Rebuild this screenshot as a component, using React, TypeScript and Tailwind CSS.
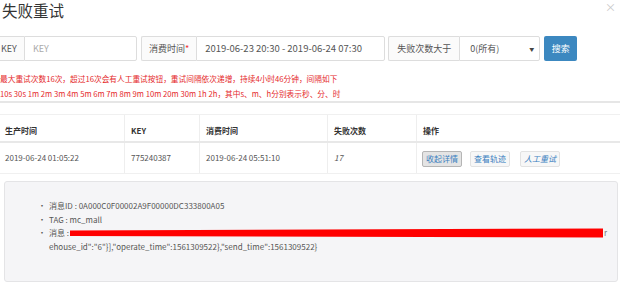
export default function App() {
  const font = { fontFamily: '"Noto Sans CJK SC", "Liberation Sans", sans-serif' };
  const wrapped = 'ehouse_id":"6"}],"operate_time":1561309522},"send_time":1561309522}';

  return (
    <div
      className="w-[620px] h-[289px] bg-white overflow-hidden text-[#555] font-['Noto_Sans_CJK_SC','Liberation_Sans',sans-serif]"
      style={font}
    >
      {/* header */}
      <div className="flex justify-between items-start">
        <h1 className="text-[15.5px] leading-[20px] text-[#333] pl-[2px]">失败重试</h1>
        <span className="text-[11px] leading-[14px] text-[#c8c8c8] pr-[4px]">×</span>
      </div>

      {/* search form */}
      <div className="flex items-center mt-[16px] h-[25px] text-[9px] whitespace-nowrap">
        <div className="flex h-full -ml-[5px]">
          <span className="flex items-center shrink-0 pl-[5px] pr-[7px] border border-[#ddd] border-r-0 bg-[#fbfbfb] rounded-l-[2px]">
            KEY
          </span>
          <span className="flex items-center shrink-0 w-[113px] px-[8px] border border-[#ddd] rounded-r-[2px] text-[#aaa]">
            KEY
          </span>
        </div>

        <div className="flex h-full ml-[4px]">
          <span className="flex items-center shrink-0 px-[7px] border border-[#ddd] border-r-0 bg-[#fbfbfb] rounded-l-[2px]">
            消费时间<span className="text-[#e33]">*</span>
          </span>
          <span className="flex items-center shrink-0 w-[189px] px-[8px] border border-[#ddd] rounded-r-[2px] text-[9.5px]">
            2019-06-23 20:30 - 2019-06-24 07:30
          </span>
        </div>

        <div className="flex h-full ml-[3px]">
          <span className="flex items-center shrink-0 px-[8px] border border-[#ddd] border-r-0 bg-[#fbfbfb] rounded-l-[2px]">
            失败次数大于
          </span>
          <span className="flex items-center justify-between shrink-0 w-[81px] pl-[10px] pr-[5px] border border-[#ddd] rounded-r-[2px]">
            0(所有)
            <span className="text-[5px] text-[#444]">▼</span>
          </span>
        </div>

        <button className="ml-[4px] h-full w-[33px] shrink-0 bg-[#3c88c0] text-white text-[9px] rounded-[2px]">
          搜索
        </button>
      </div>

      {/* tips */}
      <div className="mt-[10px] text-[7.7px] leading-[15px] text-[#e5292b]">
        <p>最大重试次数16次，超过16次会有人工重试按钮，重试间隔依次递增，持续4小时46分钟，间隔如下</p>
        <p>10s 30s 1m 2m 3m 4m 5m 6m 7m 8m 9m 10m 20m 30m 1h 2h，其中s、m、h分别表示秒、分、时</p>
      </div>
      <div className="h-[2px] bg-[#e6e6e6]" />

      {/* table */}
      <div className="mt-[11px] text-[8px] border-t border-[#f0f0f0]">
        <div className="flex h-[28px] border-b-2 border-[#e8e8e8] font-bold text-[#333]">
          <div className="w-[124px] pl-[5px] pt-[8px] leading-[16px]">生产时间</div>
          <div className="w-[75px] pl-[6px] pt-[8px] leading-[16px] border-l border-[#eee]">KEY</div>
          <div className="w-[128px] pl-[6px] pt-[8px] leading-[16px] border-l border-[#eee]">消费时间</div>
          <div className="w-[89px] pl-[6px] pt-[8px] leading-[16px] border-l border-[#eee]">失败次数</div>
          <div className="flex-1 pl-[6px] pt-[8px] leading-[16px] border-l border-[#eee]">操作</div>
        </div>
        <div className="flex h-[31px] items-stretch border-b border-[#f0f0f0]">
          <div className="w-[124px] pl-[5px] flex items-center">2019-06-24 01:05:22</div>
          <div className="w-[75px] pl-[6px] flex items-center border-l border-[#eee]">775240387</div>
          <div className="w-[128px] pl-[6px] flex items-center border-l border-[#eee]">2019-06-24 05:51:10</div>
          <div className="w-[89px] pl-[6px] flex items-center border-l border-[#eee] italic">17</div>
          <div className="flex-1 pl-[5px] pt-[2px] flex items-center gap-[8px] border-l border-[#eee] text-[#3a7fc0]">
            <span className="px-[3px] h-[16px] leading-[14px] border border-[#b5b5b5] bg-[#e4e4e4] rounded-[2px]">
              收起详情
            </span>
            <span className="px-[3px] h-[16px] leading-[14px] border border-[#e2e2e2] bg-[#f7f7f7] rounded-[2px]">
              查看轨迹
            </span>
            <span className="ml-[2px] px-[3px] h-[16px] leading-[14px] border border-[#e2e2e2] bg-[#f7f7f7] rounded-[2px] italic">
              人工重试
            </span>
          </div>
        </div>
      </div>

      {/* detail */}
      <div className="mt-[7px] ml-[4px] mr-[2px] h-[101px] bg-[#f5f5f7] border border-[#e4e4e6] rounded-[3px] pt-[17px] pl-[33px] text-[8px] leading-[13.5px]">
        <ul>
          <li className="flex">
            <span className="w-[11px]">•</span>
            <span>消息ID : 0A000C0F00002A9F00000DC333800A05</span>
          </li>
          <li className="flex">
            <span className="w-[11px]">•</span>
            <span>TAG : mc_mall</span>
          </li>
          <li className="flex">
            <span className="w-[11px]">•</span>
            <div>
              <div className="flex items-center">
                <span>消息 :</span>
                <svg width="533" height="10" viewBox="0 0 533 10" className="ml-[1px]">
                  <polygon points="0,2.5 533,0.5 533,9.5 0,8" fill="#ff0000" />
                </svg>
                <span className="ml-[1px] text-[#777]">r</span>
              </div>
              <div>{wrapped}</div>
            </div>
          </li>
        </ul>
      </div>
    </div>
  );
}
